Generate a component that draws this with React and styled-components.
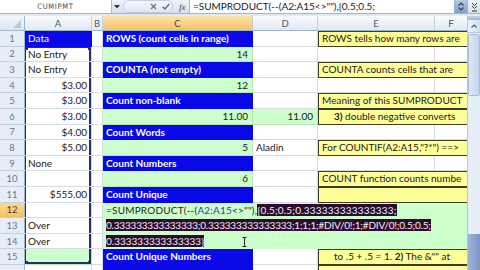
import React from 'react';
import styled, { createGlobalStyle, css } from 'styled-components';

const GlobalStyle = createGlobalStyle`
  html, body { margin: 0; padding: 0; width: 480px; height: 270px; overflow: hidden; background: #fff; }
  body { font-family: Lato, "Liberation Sans", sans-serif; }
`;

const ROW_H = 15.6;

const Window = styled.div`
  width: 480px;
  height: 270px;
  display: flex;
  flex-direction: column;
  overflow: hidden;
  background: #dde5ef;
`;

const FormulaBar = styled.div`
  height: 13px;
  display: flex;
  align-items: stretch;
  background: linear-gradient(#eef3fa, #d6e0ee);
  border-bottom: 1px solid #a3b5cc;
  flex: none;
`;

const NameBox = styled.div`
  width: 111px;
  background: #fff;
  border-right: 1px solid #a9b9d0;
  font-family: "DejaVu Sans Condensed", "DejaVu Sans", sans-serif;
  font-size: 7.5px;
  letter-spacing: 0.7px;
  color: #4a4a4a;
  line-height: 13px;
  text-align: center;
`;

const NameArrow = styled.div`
  width: 10px;
  display: flex;
  align-items: center;
  justify-content: center;
`;

const FxGroup = styled.div`
  width: 66px;
  display: flex;
  align-items: center;
  padding-left: 1px;
`;

const FxPill = styled.div`
  height: 11px;
  width: 46px;
  border-radius: 6px;
  background: linear-gradient(#f7f9fc, #dfe6f0);
  border: 1px solid #c3cfdf;
  display: flex;
  align-items: center;
  justify-content: flex-end;
  gap: 5px;
  padding-right: 2px;
`;

const FxLabel = styled.span`
  font-family: "Liberation Serif", serif;
  font-style: italic;
  font-size: 9px;
  color: #444;
  margin-left: 6px;
`;

const FormulaInput = styled.div`
  flex: 1;
  background: #fff;
  border-left: 1px solid #a9b9d0;
  font-size: 10px;
  line-height: 13px;
  padding-left: 3px;
  white-space: pre;
  overflow: hidden;
  color: #1a1a1a;
`;

const BarButton = styled.div`
  width: 12px;
  flex: none;
  display: flex;
  align-items: center;
  justify-content: center;
  background: ${p => p.$blue ? 'linear-gradient(#b9cbe6, #7f9dcc)' : 'linear-gradient(#f2f5fa, #d6e0ee)'};
  border-left: 1px solid #a3b5cc;
`;

const BarGap = styled.div`
  height: 2px;
  flex: none;
  background: #e3e9f2;
`;

const Body = styled.div`
  flex: 1;
  display: flex;
  overflow: hidden;
`;

const Sheet = styled.div`
  width: 468px;
  display: grid;
  grid-template-columns: 25px 67px 11px 150px 65px 117px 33px;
  grid-template-rows: 15px repeat(16, ${ROW_H}px);
  background: #fff;
  overflow: hidden;
  font-size: 10px;
  color: #1a1a1a;
`;

const Corner = styled.div`
  background: linear-gradient(#f3f6fa, #dde5ef);
  border-right: 1px solid #9eb6ce;
  border-bottom: 1px solid #9eb6ce;
  display: flex;
  align-items: flex-end;
  justify-content: flex-end;
  padding: 0 3px 2px 0;
`;

const ColHeader = styled.div`
  background: ${p => p.$sel ? 'linear-gradient(#fce3ad, #f6c463)' : 'linear-gradient(#f9fbfd, #e2e9f2)'};
  border-right: 1px solid #c3cedc;
  border-bottom: 1px solid #9eb6ce;
  font-size: 9.5px;
  color: ${p => p.$sel ? '#3a3f4d' : '#4a5a72'};
  display: flex;
  align-items: center;
  justify-content: center;
`;

const RowHeader = styled.div`
  background: ${p => p.$sel ? 'linear-gradient(#fbd98f, #f5c25d)' : '#e6edf7'};
  border-bottom: 1px solid #c5d1e2;
  border-right: 1px solid #9eb6ce;
  font-size: 9.5px;
  color: ${p => p.$sel ? '#3a3f4d' : '#66768c'};
  display: flex;
  align-items: center;
  justify-content: center;
`;

const bgMap = {
  white: '#fff',
  blue: '#0909e8',
  green: '#ccffcc',
  yellow: '#ffff99',
};

const Cell = styled.div`
  position: relative;
  background: ${p => bgMap[p.$bg || 'white']};
  color: ${p => p.$bg === 'blue' ? '#fff' : '#1a1a1a'};
  font-weight: ${p => p.$bold ? 700 : 400};
  text-align: ${p => p.$right ? 'right' : 'left'};
  padding: 0 ${p => p.$right ? '4px' : '0'} 0 ${p => p.$indent || 3}px;
  line-height: ${ROW_H}px;
  white-space: pre;
  overflow: hidden;
  border-right: 1px solid ${p => p.$bg === 'blue' ? '#0909e8' : p.$bg === 'green' ? '#b9e6b9' : '#d4dbe7'};
  border-bottom: 1px solid ${p => p.$bg === 'blue' ? '#0909e8' : p.$bg === 'green' ? '#b9e6b9' : '#d4dbe7'};
  ${p => p.$span && css`grid-column: span ${p.$span};`}
  ${p => p.$bg === 'yellow' && css`
    border: 1px solid #3d3d24;
    border-right: none;
    line-height: ${ROW_H - 2}px;
  `}
  ${p => p.$range && css`
    box-shadow: inset 1px ${p.$range === 'top' ? '1px' : '0'} 0 #25306a,
      inset -2px ${p.$range === 'bottom' ? '-2px' : '0'} 0 #25306a;
  `}
`;

const Handle = styled.span`
  position: absolute;
  width: 4px;
  height: 4px;
  background: #25306a;
  ${p => p.$left ? 'left: -1px;' : 'right: -1px;'}
  ${p => p.$top ? 'top: -1px;' : 'bottom: -1px;'}
`;

const Editor = styled.div`
  position: relative;
  grid-column: 4 / 8;
  grid-row: 13 / 16;
  background: #ccffcc;
  padding-left: 3px;
  line-height: ${ROW_H}px;
  white-space: pre;
  overflow: hidden;
  color: #1a2a1a;
`;

const EditorLine = styled.div`
  height: ${ROW_H}px;
  letter-spacing: ${p => p.$ls || 0}px;
`;

const Ref = styled.span`
  color: #2a3fb0;
`;

const Sel = styled.span`
  background: #2c0c2c;
  color: #f2eef2;
`;

const IBeam = styled.svg`
  position: absolute;
  left: 139px;
  top: 34px;
`;

const VScroll = styled.div`
  width: 12px;
  flex: none;
  display: flex;
  flex-direction: column;
  background: #e6edf6;
  border-left: 1px solid #b7c6da;
`;

const SplitBox = styled.div`
  height: 4px;
  background: linear-gradient(#c7d5e8, #9fb6d6);
`;

const ScrollBtn = styled.div`
  height: 12px;
  display: flex;
  align-items: center;
  justify-content: center;
  background: linear-gradient(90deg, #eef3fa, #d3deee);
  border-bottom: 1px solid #b7c6da;
`;

const Thumb = styled.div`
  height: 60px;
  margin: 1px 0;
  background: linear-gradient(90deg, #dfe8f5, #c4d3ea);
  border: 1px solid #a9bcd8;
  border-radius: 2px;
`;

const Track = styled.div`
  flex: 1;
  background: #e8eef7;
`;

const TrackLow = styled.div`
  height: 36px;
  background: linear-gradient(90deg, #9db3d9, #7c97c8);
`;

const Bold = styled.b`
  font-weight: 700;
`;

const data = {
  1: { A: { t: 'Data', bg: 'blue' }, C: { t: 'ROWS (count cells in range)', bg: 'blue', bold: true }, E: { t: 'ROWS tells how many rows are', bg: 'yellow' } },
  2: { A: { t: 'No Entry' }, C: { t: '14', bg: 'green', right: true } },
  3: { A: { t: 'No Entry' }, C: { t: 'COUNTA (not empty)', bg: 'blue', bold: true }, E: { t: 'COUNTA counts cells that are', bg: 'yellow' } },
  4: { A: { t: '$3.00', right: true }, C: { t: '12', bg: 'green', right: true } },
  5: { A: { t: '$3.00', right: true }, C: { t: 'Count non-blank', bg: 'blue', bold: true }, E: { t: 'Meaning of this SUMPRODUCT', bg: 'yellow' } },
  6: { A: { t: '$3.00', right: true }, C: { t: '11.00', bg: 'green', right: true }, D: { t: '11.00', bg: 'green', right: true }, E: { t: <><Bold>3)</Bold> double negative converts</>, bg: 'yellow', indent: 15 } },
  7: { A: { t: '$4.00', right: true }, C: { t: 'Count Words', bg: 'blue', bold: true } },
  8: { A: { t: '$5.00', right: true }, C: { t: '5', bg: 'green', right: true }, D: { t: 'Aladin' }, E: { t: 'For COUNTIF(A2:A15,"?*") ==>', bg: 'yellow' } },
  9: { A: { t: 'None' }, C: { t: 'Count Numbers', bg: 'blue', bold: true } },
  10: { A: { t: '' }, C: { t: '6', bg: 'green', right: true }, E: { t: 'COUNT function counts numbe', bg: 'yellow' } },
  11: { A: { t: '$555.00', right: true }, C: { t: 'Count Unique', bg: 'blue', bold: true }, E: { t: '', bg: 'yellow' } },
  12: { A: { t: '' }, editor: true },
  13: { A: { t: 'Over' } },
  14: { A: { t: 'Over' } },
  15: { A: { t: '', bg: 'green' }, C: { t: 'Count Unique Numbers', bg: 'blue', bold: true }, E: { t: <>to .5 + .5 = 1. <Bold>2)</Bold> The &"" at</>, bg: 'yellow', indent: 15 } },
  16: { A: { t: '' }, C: { t: '', bg: 'blue' }, D: { t: '' }, E: { t: '', bg: 'yellow' } },
};

const cols = ['A', 'B', 'C', 'D', 'E', 'F'];

function rangePos(n) {
  if (n < 2 || n > 15) return undefined;
  if (n === 2) return 'top';
  if (n === 15) return 'bottom';
  return 'mid';
}

function renderRow(n) {
  const r = data[n];
  const out = [<RowHeader key={`h${n}`} $sel={n === 12}>{n < 16 ? n : ''}</RowHeader>];
  const a = r.A || {};
  out.push(
    <Cell key={`a${n}`} $bg={a.bg} $right={a.right} $range={rangePos(n)}>
      {a.t}
      {n === 2 && <><Handle $left $top /><Handle $top /></>}
      {n === 15 && <><Handle $left /><Handle /></>}
    </Cell>
  );
  out.push(<Cell key={`b${n}`} />);
  if (r.editor) {
    out.push(
      <Editor key="editor">
        <EditorLine $ls={0.2}>=SUMPRODUCT(--(<Ref>A2:A15</Ref>&lt;&gt;""),<Sel>{'{0.5;0.5;0.333333333333333;'}</Sel></EditorLine>
        <EditorLine $ls={-0.2}><Sel>0.333333333333333;0.333333333333333;1;1;1;#DIV/0!;1;#DIV/0!;0.5;0.5;</Sel></EditorLine>
        <EditorLine><Sel>{'0.333333333333333}'}</Sel></EditorLine>
        <IBeam width="5" height="10" viewBox="0 0 5 10">
          <path d="M0.5 0.5h4M2.5 0.5v9M0.5 9.5h4" stroke="#222" strokeWidth="1" fill="none" />
        </IBeam>
      </Editor>
    );
    return out;
  }
  if (n >= 13 && n <= 14) return out;
  const c = r.C || {};
  out.push(<Cell key={`c${n}`} $bg={c.bg} $bold={c.bold} $right={c.right}>{c.t}</Cell>);
  const d = r.D || {};
  out.push(<Cell key={`d${n}`} $bg={d.bg} $right={d.right}>{d.t}</Cell>);
  const e = r.E;
  if (e) {
    out.push(<Cell key={`e${n}`} $bg={e.bg} $span={2} $indent={e.indent}>{e.t}</Cell>);
  } else {
    out.push(<Cell key={`e${n}`} />);
    out.push(<Cell key={`f${n}`} />);
  }
  return out;
}

const Chevron = ({ up, color = '#555' }) => (
  <svg width="6" height="4" viewBox="0 0 6 4">
    <path d={up ? 'M0.5 3.5L3 1L5.5 3.5' : 'M0.5 0.5L3 3L5.5 0.5'} stroke={color} strokeWidth="1.2" fill="none" />
  </svg>
);

export default function App() {
  return (
    <>
      <GlobalStyle />
      <Window>
        <FormulaBar>
          <NameBox>CUMIPMT</NameBox>
          <NameArrow>
            <svg width="6" height="4" viewBox="0 0 6 4"><path d="M0 0h6L3 3.5z" fill="#333" /></svg>
          </NameArrow>
          <FxGroup>
            <FxPill>
              <svg width="7" height="7" viewBox="0 0 7 7"><path d="M1 1L6 6M6 1L1 6" stroke="#6c7380" strokeWidth="1.3" /></svg>
              <svg width="8" height="7" viewBox="0 0 8 7"><path d="M0.8 3.8L3 6L7.3 0.8" stroke="#5b6473" strokeWidth="1.3" fill="none" /></svg>
            </FxPill>
            <FxLabel>fx</FxLabel>
          </FxGroup>
          <FormulaInput>=SUMPRODUCT(--(A2:A15&lt;&gt;""),{'{0.5;0.5;'}</FormulaInput>
          <BarButton $blue>
            <svg width="6" height="9" viewBox="0 0 6 9"><path d="M0.5 3.5L3 1L5.5 3.5M0.5 5.5L3 8L5.5 5.5" stroke="#2c3e5e" strokeWidth="1.1" fill="none" /></svg>
          </BarButton>
          <BarButton>
            <svg width="7" height="10" viewBox="0 0 7 10"><path d="M1 1L3.5 3.5L6 1M1 4L3.5 6.5L6 4M1 9L6 9" stroke="#333" strokeWidth="1" fill="none" /></svg>
          </BarButton>
        </FormulaBar>
        <BarGap />
        <Body>
          <Sheet>
            <Corner>
              <svg width="8" height="8" viewBox="0 0 8 8"><path d="M8 0V8H0z" fill="#b9c6d6" /></svg>
            </Corner>
            {cols.map(c => <ColHeader key={c} $sel={c === 'C'}>{c}</ColHeader>)}
            {Array.from({ length: 16 }, (_, i) => renderRow(i + 1))}
          </Sheet>
          <VScroll>
            <SplitBox />
            <ScrollBtn><Chevron up color="#4a5a78" /></ScrollBtn>
            <Thumb />
            <Track />
            <TrackLow />
          </VScroll>
        </Body>
      </Window>
    </>
  );
}
